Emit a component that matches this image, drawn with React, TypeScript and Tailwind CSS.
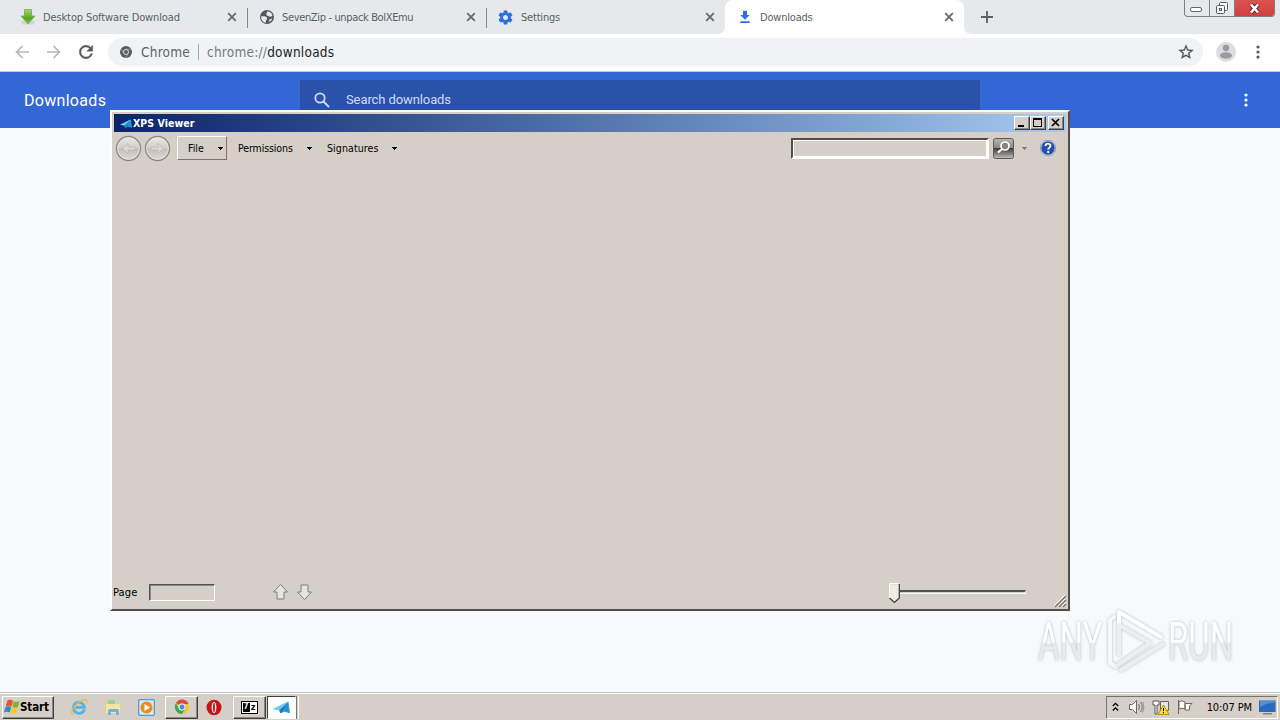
import type { ReactNode } from "react";

const tabs = [
  { title: "Desktop Software Download", icon: "green", spacing: "tracking-[-0.12px]" },
  { title: "SevenZip - unpack BolXEmu", icon: "globe", spacing: "tracking-[-0.35px]" },
  { title: "Settings", icon: "gear", spacing: "tracking-[-0.2px]" },
  { title: "Downloads", icon: "download", spacing: "tracking-[-0.2px]" },
];

const raised = "border border-t-white border-l-white border-r-[#404040] border-b-[#404040] shadow-[inset_-1px_-1px_0_#8b8782]";

function TabIcon({ kind }: { kind: string }) {
  if (kind === "green")
    return (
      <svg width="16" height="18" viewBox="0 0 16 18">
        <defs><linearGradient id="gr" x1="0" y1="0" x2="0" y2="1"><stop offset="0" stopColor="#a9d86a" /><stop offset=".6" stopColor="#58a51f" /><stop offset="1" stopColor="#86c944" /></linearGradient></defs>
        <path d="M1 12.500h14l-1 4H2z" fill="#d0d4cf" />
        <path d="M4.500 1.500h7V8H15l-7 8L1 8h3.500z" fill="url(#gr)" stroke="#74ab4d" strokeWidth=".8" />
      </svg>
    );
  if (kind === "globe")
    return (
      <svg width="16" height="16" viewBox="0 0 16 16">
        <circle cx="8" cy="8" r="7" fill="#54585c" />
        <path d="M2.300 7.300c2.600 0 5-.3 5.700 1.600.6 1.700-1.500 1.600-1.100 4.900C3.700 13.300 1.700 10.600 2.300 7.300zM8 2.600c2.400-.3 4.800 1.300 5.500 3.800-1.300.9-2.500 1.800-3.700.9-1.100-.9-2.700-.3-2.500-2 .1-1 .7-1.300.7-2.700zM10.200 10.500c1.200-.2 2.300-.6 3.100-1.200-.4 1.700-1.500 3-3 3.700z" fill="#e7eaed" />
      </svg>
    );
  if (kind === "gear")
    return (
      <svg width="17" height="17" viewBox="0 0 24 24" className="-ml-px" fill="#2b6fe0">
        <path d="M19.430 12.980c.04-.32.07-.64.07-.98s-.03-.66-.07-.98l2.110-1.650c.19-.15.24-.42.12-.64l-2-3.460c-.12-.22-.39-.3-.61-.22l-2.490 1c-.52-.4-1.080-.73-1.690-.98l-.38-2.650C14.460 2.180 14.250 2 14 2h-4c-.25 0-.46.18-.49.42l-.38 2.650c-.61.25-1.170.59-1.690.98l-2.490-1c-.23-.09-.49 0-.61.22l-2 3.460c-.13.22-.07.49.12.64l2.110 1.650c-.04.32-.07.65-.07.98s.03.66.07.98l-2.110 1.650c-.19.15-.24.42-.12.64l2 3.460c.12.22.39.3.61.22l2.490-1c.52.4 1.080.73 1.690.98l.38 2.650c.03.24.24.42.49.42h4c.25 0 .46-.18.49-.42l.38-2.650c.61-.25 1.170-.59 1.690-.98l2.490 1c.23.09.49 0 .61-.22l2-3.460c.12-.22.07-.49-.12-.64zM12 15.500c-1.930 0-3.500-1.570-3.500-3.500s1.570-3.500 3.500-3.500 3.500 1.570 3.500 3.500-1.570 3.500-3.500 3.500z" />
      </svg>
    );
  return (
    <svg width="16" height="16" viewBox="0 0 24 24" fill="#2b6fe0"><path d="M19 9h-4V2.500H9V9H5l7 7zM5 18.500v2.500h14v-2.500z" /></svg>
  );
}

function Cross() {
  return <svg width="16" height="16" viewBox="0 0 16 16"><path d="M4.200 4.200l7.600 7.600M11.800 4.200l-7.600 7.600" stroke="#66696d" strokeWidth="1.800" /></svg>;
}

function TabStrip() {
  return (
    <div className="flex h-[34px] bg-[#e6e9ec] pl-2">
      {tabs.map((t, i) => (
        <div key={t.title} className={`relative flex h-[34px] w-[239px] items-center pl-3 pr-[7px] ${i === 3 ? "rounded-t-lg bg-white" : ""}`}>
          {i === 3 && (
            <svg className="absolute bottom-0 -left-2" width="255" height="8" viewBox="0 0 255 8" fill="#fff"><path d="M0 8Q8 8 8 0V8zM255 8Q247 8 247 0V8z" /></svg>
          )}
          <div className="flex w-[23px] shrink-0 items-center"><TabIcon kind={t.icon} /></div>
          <span className={`flex-1 whitespace-nowrap pt-px font-['DejaVu_Sans_Condensed','DejaVu_Sans',sans-serif] text-[11px] leading-4 text-[#5a5e62] [font-stretch:condensed] ${t.spacing}`}>{t.title}</span>
          <Cross />
          {i < 2 && <div className="absolute right-[-1px] top-2 h-5 w-px bg-[#85888b]" />}
        </div>
      ))}
      <div className="flex w-[45px] items-center justify-center">
        <svg width="14" height="14" viewBox="0 0 14 14"><path d="M7 1v12M1 7h12" stroke="#5b5f63" strokeWidth="1.800" /></svg>
      </div>
      <div className="ml-auto mr-[5px] flex h-[17px] overflow-hidden rounded-b-[4px] border border-t-0 border-[#7c8084]">
        <div className="flex w-[25px] items-center justify-center border-r border-[#7c8084]">
          <svg width="13" height="6" viewBox="0 0 13 6" className="-ml-px mt-[4px]"><rect x=".5" y=".5" width="11" height="4" rx="1.500" fill="#fff" stroke="#62676c" /></svg>
        </div>
        <div className="flex w-[25px] items-center justify-center border-r border-[#7c8084]">
          <svg className="-ml-px" width="14" height="14" viewBox="0 0 14 14" fill="#f4f6f8" stroke="#575c61"><rect x="4.500" y="1.500" width="8" height="8" rx="1" /><rect x="1.500" y="4.500" width="8" height="8" rx="1" /><rect x="4.500" y="7.500" width="2" height="2" /></svg>
        </div>
        <div className="flex w-[39px] items-center justify-center bg-gradient-to-b from-[#da5350] to-[#d23f3d]">
          <svg width="13" height="13" viewBox="0 0 13 13"><path d="M3 2.500l7 8M10 2.500l-7 8" stroke="#5d2727" strokeWidth="4.200" /><path d="M3 2.500l7 8M10 2.500l-7 8" stroke="#fff" strokeWidth="2.600" /></svg>
        </div>
      </div>
    </div>
  );
}

function Toolbar() {
  return (
    <div className="flex h-[38px] items-center border-b border-[#c8cccf] bg-white pb-px pl-[14px] pr-[15px]">
      <svg width="16" height="16" viewBox="0 0 16 16" fill="none" stroke="#b5b7b9" strokeWidth="1.700"><path d="M15 8H2.500M8.500 2L2.500 8l6 6" /></svg>
      <svg className="ml-4" width="16" height="16" viewBox="0 0 16 16" fill="none" stroke="#b5b7b9" strokeWidth="1.700"><path d="M1 8h12.500M7.500 2l6 6-6 6" /></svg>
      <svg className="ml-[14px]" width="20" height="20" viewBox="0 0 24 24" fill="#56595d" stroke="#56595d" strokeWidth=".5"><path d="M17.650 6.350C16.200 4.900 14.210 4 12 4c-4.420 0-7.990 3.580-7.990 8s3.570 8 7.990 8c3.730 0 6.840-2.550 7.730-6h-2.080c-.82 2.330-3.040 4-5.650 4-3.310 0-6-2.690-6-6s2.690-6 6-6c1.660 0 3.140.69 4.220 1.780L13 11h7V4z" /></svg>
      <div className="ml-3 flex h-7 w-[1095px] items-center rounded-full bg-[#f0f3f5] pl-[11px] pr-[8px]">
        <svg width="14" height="14" viewBox="0 0 14 14"><circle cx="7" cy="7" r="6" fill="#56595d" /><circle cx="7" cy="7" r="2.500" fill="#56595d" stroke="#e4e7e9" strokeWidth="1" /><path d="M7 4.200h5.500M4.700 8.400L2 3.900M9.300 8.400L6.700 12.800" stroke="#c0c4c7" strokeWidth=".6" /></svg>
        <div className="flex items-center pl-2 font-['DejaVu_Sans_Condensed','DejaVu_Sans',sans-serif] text-[13.500px] leading-[18px] tracking-[0.23px] text-[#606469] [font-stretch:condensed]">
          <span className="w-[49px] whitespace-nowrap">Chrome</span>
          <span className="mx-[8px] h-4 w-px bg-[#a5a8ab]" />
          <span className="whitespace-nowrap text-[#777b80]">chrome://<span className="text-[#202124]">downloads</span></span>
        </div>
        <svg className="ml-auto" width="18" height="18" viewBox="0 0 24 24" fill="#505458" stroke="#505458" strokeWidth=".3"><path d="M22 9.240l-7.190-.62L12 2 9.190 8.630 2 9.240l5.460 4.730L5.820 21 12 17.270 18.180 21l-1.630-7.030zM12 15.400l-3.760 2.270 1-4.280-3.320-2.880 4.380-.38L12 6.100l1.710 4.040 4.380.38-3.320 2.880 1 4.280z" /></svg>
      </div>
      <svg className="ml-[13px]" width="20" height="20" viewBox="0 0 20 20"><circle cx="10" cy="10" r="10" fill="#dcdddf" /><circle cx="10" cy="6" r="3.200" fill="#999b9d" /><ellipse cx="10" cy="13.500" rx="6" ry="3.200" fill="#999b9d" /></svg>
      <Dots className="ml-auto text-[#55595d]" />
    </div>
  );
}

function Dots({ className }: { className: string }) {
  return <svg className={className} width="14" height="16" viewBox="0 0 14 16" fill="currentColor"><circle cx="7" cy="3" r="1.600" /><circle cx="7" cy="8" r="1.600" /><circle cx="7" cy="13" r="1.600" /></svg>;
}

function Plane({ size }: { size: number }) {
  return (
    <svg width={size} height={size * 0.75} viewBox="0 0 16 12">
      <path d="M0 7.500L14.500 .5l1.500 11-5.500-1.500L7 12 5.500 8.500z" fill="#35a7df" /><path d="M0 7.500L14.500 .5 5.500 8.500z" fill="#73cdf2" /><path d="M14 2L7 8.500V12l2-3z" fill="#1668a8" /><path d="M14 2l1.500 9L9 9z" fill="#2891d3" />
    </svg>
  );
}

function Caret({ className = "text-black" }: { className?: string }) {
  return <svg className={className} width="5" height="3" viewBox="0 0 5 3" fill="currentColor" shapeRendering="crispEdges"><path d="M0 0h5v1H4v1H3v1H2V2H1V1H0z" /></svg>;
}

function WinButton({ children }: { children: ReactNode }) {
  return <div className={`flex h-[14px] w-4 items-center justify-center bg-[#d4d0c8] ${raised}`}>{children}</div>;
}

function RoundButton({ flip }: { flip?: boolean }) {
  const id = flip ? "rb2" : "rb1";
  return (
    <svg width="27" height="27" viewBox="0 0 27 27">
      <defs><linearGradient id={id} x1="0" y1="0" x2="0" y2="1"><stop offset="0" stopColor="#ebe9e6" /><stop offset=".48" stopColor="#d2cfca" /><stop offset=".52" stopColor="#c3bfba" /><stop offset="1" stopColor="#dedbd6" /></linearGradient></defs>
      <circle cx="13.500" cy="13.500" r="12" fill={`url(#${id})`} stroke="#8b8883" strokeWidth="1.300" /><circle cx="13.500" cy="13.500" r="10.800" fill="none" stroke="#e8e5e1" />
      <path d={flip ? "M7 12h7V8.500l5.500 5-5.500 5V15H7z" : "M20 12h-7V8.500l-5.500 5 5.500 5V15h7z"} fill="#dcd9d4" stroke="#bcb8b3" strokeWidth=".8" />
    </svg>
  );
}

function XpsWindow() {
  return (
    <section className="absolute left-[110px] top-[110px] flex h-[501px] w-[960px] flex-col border-2 border-b-[#504e4b] border-l-white border-r-[#504e4b] border-t-white bg-[#d5cfc8] p-[2px] font-['DejaVu_Sans_Condensed','DejaVu_Sans',sans-serif] text-[10.500px] text-black [font-stretch:condensed]">
      <div className="flex h-[18px] shrink-0 items-center bg-gradient-to-r from-[#0b246a] to-[#a6caf0] pl-[6px] pr-[2px]">
        <Plane size={12} />
        <span className="ml-[1px] flex-1 whitespace-nowrap text-[10.500px] font-bold leading-4 tracking-[0.05px] text-white">XPS Viewer</span>
        <WinButton><svg width="12" height="10" viewBox="0 0 12 10"><path d="M2 7h6v2H2z" /></svg></WinButton>
        <WinButton><svg width="12" height="10" viewBox="0 0 12 10" shapeRendering="crispEdges"><path d="M1 0h9v9H1zM2 2v6h7V2z" fillRule="evenodd" /></svg></WinButton>
        <div className="ml-[2px]"><WinButton><svg width="12" height="10" viewBox="0 0 12 10"><path d="M2 1l7 7M9 1L2 8" stroke="#000" strokeWidth="1.700" /></svg></WinButton></div>
      </div>
      <div className="flex h-[33px] shrink-0 items-center pb-[1px]">
        <div className="ml-[1px] flex w-[59px] gap-[2px]"><RoundButton /><RoundButton flip /></div>
        <div className="ml-[3px] flex h-6 w-[50px] items-center border border-b-[#77736e] border-l-white border-r-[#77736e] border-t-white pl-[10px]">
          <span className="w-[30px] pt-px">File</span><Caret />
        </div>
        <span className="ml-[11px] w-[69px] whitespace-nowrap pt-[2px] tracking-[-0.1px]">Permissions</span><Caret />
        <span className="ml-[15px] w-[65px] whitespace-nowrap pt-[2px] tracking-[0.1px]">Signatures</span><Caret />
        <div className="ml-auto h-[21px] w-[198px] border-2 border-b-white border-l-[#514e4b] border-r-white border-t-[#514e4b]"><div className="h-full border border-white" /></div>
        <svg className="ml-1" width="22" height="21" viewBox="0 0 22 21">
          <defs><linearGradient id="sb" x1="0" y1="0" x2="0" y2="1"><stop offset="0" stopColor="#b8b7b5" /><stop offset=".48" stopColor="#888785" /><stop offset=".5" stopColor="#3e3d3c" /><stop offset="1" stopColor="#c4c2bf" /></linearGradient></defs>
          <rect x=".5" y=".5" width="20" height="20" rx="2" fill="url(#sb)" stroke="#5c5a57" />
          <circle cx="12" cy="8" r="4" fill="#858483" stroke="#fff" strokeWidth="1.700" /><path d="M9.300 10.800L5 14.500" stroke="#fff" strokeWidth="2.200" />
        </svg>
        <div className="ml-[7px]"><Caret className="text-[#817d78]" /></div>
        <svg className="ml-[13px] mr-[10px]" width="16" height="16" viewBox="0 0 16 16">
          <circle cx="8" cy="8" r="7.300" fill="#234eb5" stroke="#f1f2f3" /><circle cx="8" cy="8" r="7.700" fill="none" stroke="#60749d" strokeWidth=".6" />
          <path d="M5.500 6C5.600 3 10.500 3 10.500 5.800c0 1.800-2.300 1.900-2.300 3.800" fill="none" stroke="#fff" strokeWidth="1.800" /><circle cx="8.200" cy="12" r="1.150" fill="#fff" />
        </svg>
      </div>
      <div className="flex-1" />
      <div className="flex h-[31px] shrink-0 items-center">
        <span className="-ml-[1px] w-9 pt-[4px] text-[11px] tracking-[0.15px]">Page</span>
        <div className="mt-px h-[17px] w-[66px] border border-b-white border-l-[#55514d] border-r-white border-t-[#55514d] shadow-[inset_1px_1px_0_#8a8681]" />
        {[0, 1].map((n) => (
          <svg key={n} className={n ? "ml-[7px] rotate-180" : "ml-[57px]"} width="17" height="18" viewBox="0 0 17 18"><path d="M8.500 1.500L15.500 9h-3.500v7h-7V9H1.500z" fill="#e8e5e1" stroke="#807d79" /></svg>
        ))}
        <div className="ml-auto mr-[40px] flex h-[20px] items-start">
          <svg className="mt-px" width="11" height="21" viewBox="0 0 11 21"><path d="M.5 1.500h9.500v13.500l-4.500 4.500-5-4.500z" fill="#eeebe7" /><path d="M.5 15V.5H10" fill="none" stroke="#fff" /><path d="M10.300 1v14l-4.800 4.500L.5 15" fill="none" stroke="#3a3836" strokeWidth="1.200" /></svg>
          <div className="mt-[8px] h-[4px] w-[126px] border-b border-r border-t-2 border-b-white border-r-white border-t-[#55514c]" />
        </div>
      </div>
      <svg className="absolute bottom-0 right-0" width="15" height="15" viewBox="0 0 15 15"><path d="M2 13L13 2M6 13l7-7M10 13l3-3" stroke="#7e7a75" strokeWidth="1.500" /><path d="M1 12L12 1M5 12l7-7M9 12l4-4" stroke="#fff" /></svg>
    </section>
  );
}

function Watermark() {
  const word = "origin-left scale-x-[0.61] whitespace-nowrap bg-gradient-to-b from-white from-50% to-[#e8eaeb] to-52% bg-clip-text font-['Roboto',sans-serif] text-[54px] leading-[54px] text-transparent";
  return (
    <div className="absolute left-[1038px] top-[609px] flex h-[66px] w-[200px] items-center [filter:drop-shadow(0_0_1.5px_#b7bbbd)]">
      <div className="w-[69px]"><span className={`block w-[120px] ${word}`}>ANY</span></div>
      <svg className="-mt-[2px]" width="60" height="66" viewBox="0 0 60 66" fill="none" strokeLinejoin="round" strokeLinecap="round">
        <path d="M7 9L3 12v43l6 4" stroke="#f7f8f9" strokeWidth="4" /><path d="M12 46V4l42 25" stroke="#fff" strokeWidth="4" /><path d="M12 46V17l31 18L9 58M14 62l42-26" stroke="#edefef" strokeWidth="4" />
      </svg>
      <div className="w-[66px] pl-px"><span className={`block w-[120px] ${word}`}>RUN</span></div>
    </div>
  );
}

function TaskButton({ active, children }: { active?: boolean; children: ReactNode }) {
  return <div className={`flex h-[23px] shrink-0 items-center justify-center ${active ? "w-[29px] border border-b-white border-l-[#404040] border-r-white border-t-[#404040] bg-white" : `w-[33px] bg-[#d5cfc8] ${raised}`}`}>{children}</div>;
}

function Taskbar() {
  return (
    <footer className="flex h-[28px] items-center border-t border-[#c5c1bc] bg-[#d5cfc8] pt-px font-['DejaVu_Sans_Condensed','DejaVu_Sans',sans-serif] [font-stretch:condensed] shadow-[inset_0_1px_0_#fff]">
      <div className={`ml-[2px] flex h-[23px] w-[52px] shrink-0 items-center pl-[1px] ${raised}`}>
        <svg className="shrink-0" width="16" height="16" viewBox="0 0 16 16"><path d="M3.500 1.500c2-1 3.500-.8 5.500.2L7.500 7.500C5.500 6.500 4 6.500 1.700 7.500z" fill="#ef5028" /><path d="M9.500 2.200c2 1 3.500.8 6-.2L14 8c-2 1-3.500.8-5.500-.2z" fill="#79b72b" /><path d="M1.500 8C3.300 7 5 7 7.200 8l-1.500 5.500C3.700 12.500 2 12.500 0 13.500z" fill="#298ad0" /><path d="M8 8.300c2 1 3.700 1 5.700.2l-1.500 5.500c-2 1-3.700.7-5.500-.3z" fill="#fbc51b" /></svg>
        <span className="text-[11.500px] font-bold leading-4 tracking-[-0.1px]">Start</span>
      </div>
      <div className="flex w-[101px] shrink-0 items-center justify-between pl-4">
        <svg width="18" height="18" viewBox="0 0 18 18" fill="none"><path d="M14.500 11.500C12 18 3 15.500 3.500 9S13 3 14.500 9.300H5.500" stroke="#50b4ea" strokeWidth="2.800" /><path d="M3 16.500C0 16 3 9 8 5s10-5 8.500-.5" stroke="#e5bb48" strokeWidth="1.400" /></svg>
        <svg width="18" height="17" viewBox="0 0 18 17"><path d="M1 3h6l1.500 2H16v8H1z" fill="#edcb6d" /><path d="M4 1h7v4H4z" fill="#9cd091" /><path d="M2 5h14v9H2z" fill="#f6e4a1" /><path d="M4 16v-4q0-2 2-2h7q2 0 2 2v4h-3v-3H7v3z" fill="#6cb5df" /></svg>
        <svg width="17" height="17" viewBox="0 0 17 17"><rect x=".7" y=".7" width="15.600" height="15.600" rx="1" fill="#d7eaf6" stroke="#4b9ed5" strokeWidth="1.300" /><circle cx="8.500" cy="8.500" r="6" fill="#f08b18" /><path d="M6.500 5v7L12 8.500z" fill="#fff" /></svg>
      </div>
      <div className="ml-[10px] flex w-[135px] shrink-0 items-center">
        <TaskButton><svg width="16" height="16" viewBox="0 0 16 16"><circle cx="8" cy="8" r="7" fill="#f4c629" /><path d="M8 8L2 4A7 7 0 0 1 14.500 5H8z" fill="#df493b" /><path d="M2 4.300A7 7 0 0 0 8 15l3-5H5z" fill="#3ba557" /><circle cx="8" cy="8" r="3.200" fill="#478af1" stroke="#fff" /></svg></TaskButton>
        <svg className="ml-2 mr-[10px] shrink-0" width="17" height="17" viewBox="0 0 17 17"><ellipse cx="8" cy="8.500" rx="7.500" ry="7.800" fill="#c51519" /><ellipse cx="8" cy="8.500" rx="2.400" ry="5.700" fill="#eee8e5" /><ellipse cx="8" cy="8.500" rx=".9" ry="4.700" fill="#a81319" /></svg>
        <TaskButton>
          <div className="flex h-[13px] w-[17px] shrink-0 items-center justify-center border border-black bg-white text-[10px] font-bold leading-none text-black">
            <span className="flex h-[9px] w-[7px] items-center justify-center bg-black text-[8px] text-white">7</span><span className="flex h-[9px] w-[7px] items-center justify-center text-[9px]">z</span>
          </div>
        </TaskButton>
        <div className="ml-px flex border-r border-[#77736e]"><TaskButton active><Plane size={17} /></TaskButton></div>
        <div className="ml-px h-[23px] w-px bg-white" />
      </div>
      <div className="ml-auto mr-[2px] flex h-[23px] w-[172px] items-center border border-b-white border-l-[#77736e] border-r-white border-t-[#77736e] pl-[5px] pr-[1px]">
        <svg width="7" height="10" viewBox="0 0 7 10" fill="none" stroke="#000" strokeWidth="1.300"><path d="M.8 4l2.700-2.700L6.200 4M.8 8.500l2.700-2.700L6.200 8.500" /></svg>
        <svg className="ml-[9px]" width="18" height="16" viewBox="0 0 18 16" fill="none" stroke="#6b6967"><path d="M1.500 5.500h3l4-4v13l-4-4h-3z" fill="#fff" /><path d="M10.500 5q2 3 0 6M12.500 3q3.500 5 0 10" /><path d="M14.700 2.500q2.500 5.500 0 11" stroke="#99958f" /></svg>
        <svg className="ml-[6px]" width="19" height="17" viewBox="0 0 19 17"><path d="M1 2h6v4H5v9H3V6H1z" fill="#fff" stroke="#4c4a48" strokeWidth=".9" /><path d="M8.500 2.500h8v9h-8z" fill="#e8e5df" stroke="#66625e" /><path d="M11.500 6L17 15.500H6z" fill="#ffdb31" stroke="#b59213" /><path d="M11.500 9v3M11.500 13v1.300" stroke="#000" /></svg>
        <svg className="ml-[5px]" width="18" height="16" viewBox="0 0 18 16"><path d="M2.500 1v14M3 2.500q3-1.500 6 .5v7q-3-1.500-6 0zM9 4.500h7l-2.500 2.500V11H9z" fill="#fff" stroke="#6a6764" /></svg>
        <span className="ml-auto mr-[7px] whitespace-nowrap pt-px text-[11px] leading-4 tracking-[-0.1px]">10:07 PM</span>
        <svg width="17" height="15" viewBox="0 0 17 15"><rect x=".5" y="1" width="15.500" height="10.500" fill="#276bc7" stroke="#37659c" /><path d="M1 7Q7 3 16 2.500V1H1z" fill="#4a91da" /><path d="M4 13h9v1.500H4z" fill="#7a838c" /></svg>
      </div>
    </footer>
  );
}

export default function App() {
  return (
    <div className="relative flex h-[720px] w-[1280px] flex-col overflow-hidden bg-[#f7fafc]">
      <TabStrip />
      <Toolbar />
      <header className="flex h-14 shrink-0 items-center bg-[#3367d6] pl-6 pr-[27px] font-['Roboto',sans-serif] text-white">
        <h1 className="w-[276px] pt-[2px] text-[16px] tracking-[0.3px]">Downloads</h1>
        <div className="flex h-10 w-[680px] items-center bg-[#2a52ab] pl-[13px] text-[#cfdcf8]">
          <svg width="18" height="18" viewBox="0 0 18 18" fill="none" stroke="currentColor" strokeWidth="1.800"><circle cx="7" cy="7" r="4.700" /><path d="M10.500 10.500l5.500 5.500" /></svg>
          <span className="ml-[15px] text-[13px] tracking-[-0.1px]">Search downloads</span>
        </div>
        <Dots className="ml-auto text-white" />
      </header>
      <main className="flex-1" />
      <Taskbar />
      <XpsWindow />
      <Watermark />
    </div>
  );
}
